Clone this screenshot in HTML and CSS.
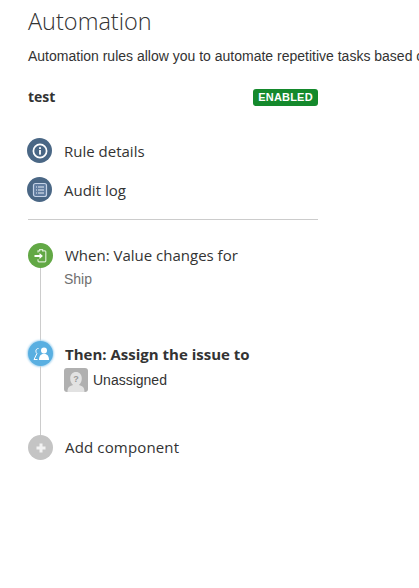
FILE: index.html
```html
<!DOCTYPE html>
<html lang="en">
<head>
<meta charset="utf-8">
<title>Automation</title>
<link rel="stylesheet" href="styles.css">
</head>
<body>
<main class="page">
  <h1 class="title">Automation</h1>
  <p class="intro">Automation rules allow you to automate repetitive tasks based on</p>
  <section class="panel">
    <div class="rule-head">
      <span class="rule-name">test</span>
      <span class="badge">ENABLED</span>
    </div>
    <nav class="menu">
      <a class="menu-item">
        <span class="dot dot-navy">
          <svg viewBox="0 0 24 24" width="24" height="24"><circle cx="12" cy="12" r="6.600" fill="none" stroke="#fff" stroke-width="1.700"/><rect x="11.100" y="11" width="1.800" height="4.600" fill="#fff"/><rect x="11.100" y="8.200" width="1.800" height="1.800" fill="#fff"/></svg>
        </span>
        <span class="menu-label">Rule details</span>
      </a>
      <a class="menu-item">
        <span class="dot dot-navy">
          <svg viewBox="0 0 24 24" width="24" height="24"><rect x="5.500" y="5.500" width="13" height="13" rx="2" fill="#7f9ac0" fill-opacity=".45" stroke="#c4d2e6" stroke-width="1.200"/><path d="M8 9h1M10 9h6M8 12h1M10 12h6M8 15h1M10 15h6" stroke="#e6edf6" stroke-width="1.100" fill="none"/></svg>
        </span>
        <span class="menu-label">Audit log</span>
      </a>
    </nav>
    <hr class="rule-line">
    <ol class="flow">
      <li class="step step-when">
        <div class="rail">
          <span class="dot dot-green">
            <svg viewBox="0 0 24 24" width="24" height="24"><path d="M9 8.500V6.800h1.600V5.600h3v1.200h2.200a1 1 0 0 1 1 1v9a1 1 0 0 1-1 1H10a1 1 0 0 1-1-1v-1.600" fill="none" stroke="#d9ecd2" stroke-width="1.200"/><path d="M5.500 11h5V9l3.400 3-3.400 3v-2h-5z" fill="#fff"/></svg>
          </span>
          <span class="wire"></span>
        </div>
        <div class="step-body">
          <div class="step-title">When: Value changes for</div>
          <div class="step-sub">Ship</div>
        </div>
      </li>
      <li class="step step-then">
        <div class="rail">
          <span class="dot dot-blue">
            <svg viewBox="0 0 24 24" width="24" height="24"><circle cx="15" cy="8.400" r="3" fill="#fff"/><path d="M10 18c0-4 2-6.200 5-6.200s5 2.200 5 6.200z" fill="#fff"/><path d="M9.500 6.500a2.400 2.400 0 0 0-2.600 2.700c0 1 .4 1.800 1 2.400L5 17.500h3.500" fill="none" stroke="#fff" stroke-width="1"/></svg>
          </span>
          <span class="wire"></span>
        </div>
        <div class="step-body step-body-then">
          <div class="step-title step-strong">Then: Assign the issue to</div>
          <div class="assignee">
            <span class="avatar">
              <svg viewBox="0 0 24 24" width="24" height="24"><rect width="24" height="24" rx="3" fill="#b0b0b0"/><path d="M3.500 24c0-4.500 1.600-5.800 5.600-7-1.700-1.500-2.900-3.800-2.900-6.600C6.200 6.700 8.600 4 12 4s5.800 2.700 5.800 6.400c0 2.800-1.200 5.100-2.900 6.600 4 1.200 5.600 2.500 5.600 7z" fill="#e2e2e2"/><text x="12" y="14" class="avatar-mark">?</text></svg>
            </span>
            <span class="assignee-name">Unassigned</span>
          </div>
        </div>
      </li>
      <li class="step step-add">
        <div class="rail">
          <span class="dot dot-grey">
            <svg viewBox="0 0 24 24" width="24" height="24"><path d="M12 7.500v9M7.500 12h9" stroke="#f2f2f2" stroke-width="3"/></svg>
          </span>
        </div>
        <div class="step-body">
          <div class="step-title step-title-wide">Add component</div>
        </div>
      </li>
    </ol>
  </section>
</main>
</body>
</html>
```

FILE: styles.css
```css
html, body {
  margin: 0;
  padding: 0;
  background: #fff;
  overflow: hidden;
}

body {
  width: 419px;
  height: 588px;
  font-family: "Liberation Sans", Arial, sans-serif;
  color: #333;
}

.page {
  padding: 6px 0 0 28px;
  width: 391px;
  overflow: hidden;
}

.title {
  margin: 0;
  font-family: "Open Sans", sans-serif;
  font-weight: 300;
  font-size: 23.5px;
  line-height: 30px;
  color: #333;
}

.intro {
  margin: 12px 0 0;
  font-size: 14px;
  line-height: 16px;
  white-space: nowrap;
  color: #333;
}

.panel {
  width: 290px;
}

.rule-head {
  display: flex;
  justify-content: space-between;
  align-items: center;
  margin-top: 24px;
  height: 18px;
}

.rule-name {
  font-family: "Open Sans", sans-serif;
  font-weight: 700;
  font-size: 14px;
  line-height: 16px;
  color: #333;
}

.badge {
  width: 65px;
  height: 17px;
  box-sizing: border-box;
  background: #14892c;
  border-radius: 3px;
  color: #fff;
  font-size: 11px;
  font-weight: 700;
  line-height: 17px;
  text-align: center;
  letter-spacing: .2px;
}

.menu {
  display: flex;
  flex-direction: column;
  gap: 14px;
  margin: 32px 0 0 -1px;
}

.menu-item {
  display: flex;
  align-items: center;
  gap: 12px;
  height: 25px;
}

.menu-label,
.step-title {
  font-family: "Open Sans", sans-serif;
  font-size: 15px;
  line-height: 20px;
  color: #333;
}

.step-title-wide {
  letter-spacing: .15px;
}

.dot {
  display: flex;
  align-items: center;
  justify-content: center;
  flex: none;
  width: 25px;
  height: 25px;
  border-radius: 50%;
}

.dot-navy { background: #4a6785; }
.dot-green { background: #62a845; }
.dot-blue { background: #59afe1; box-shadow: 0 0 2px 1px #a9d6f1; }
.dot-grey { background: #c4c4c4; }

.rule-line {
  margin: 17px 0 0;
  border: 0;
  height: 1px;
  background: #ccc;
}

.flow {
  list-style: none;
  margin: 23px 0 0;
  padding: 0;
}

.step {
  display: flex;
  gap: 12px;
}

.step-when { height: 98px; }
.step-then { height: 94px; }

.rail {
  display: flex;
  flex-direction: column;
  align-items: center;
  width: 25px;
  flex: none;
}

.wire {
  flex: 1;
  width: 1px;
  background: #ccc;
}

.step-body {
  padding-top: 2px;
}

.step-body-then {
  padding-top: 3px;
}

.step-strong {
  font-weight: 700;
}

.step-sub {
  margin: 6px 0 0 -1px;
  font-size: 14px;
  line-height: 16px;
  color: #707070;
}

.assignee {
  display: flex;
  align-items: center;
  gap: 5px;
  margin: 4px 0 0 -1px;
}

.avatar {
  display: block;
  width: 24px;
  height: 24px;
}

.avatar-mark {
  font-family: "Liberation Sans", sans-serif;
  font-size: 9px;
  font-weight: 700;
  fill: #999;
  text-anchor: middle;
}

.assignee-name {
  font-size: 14px;
  color: #333;
}
```
